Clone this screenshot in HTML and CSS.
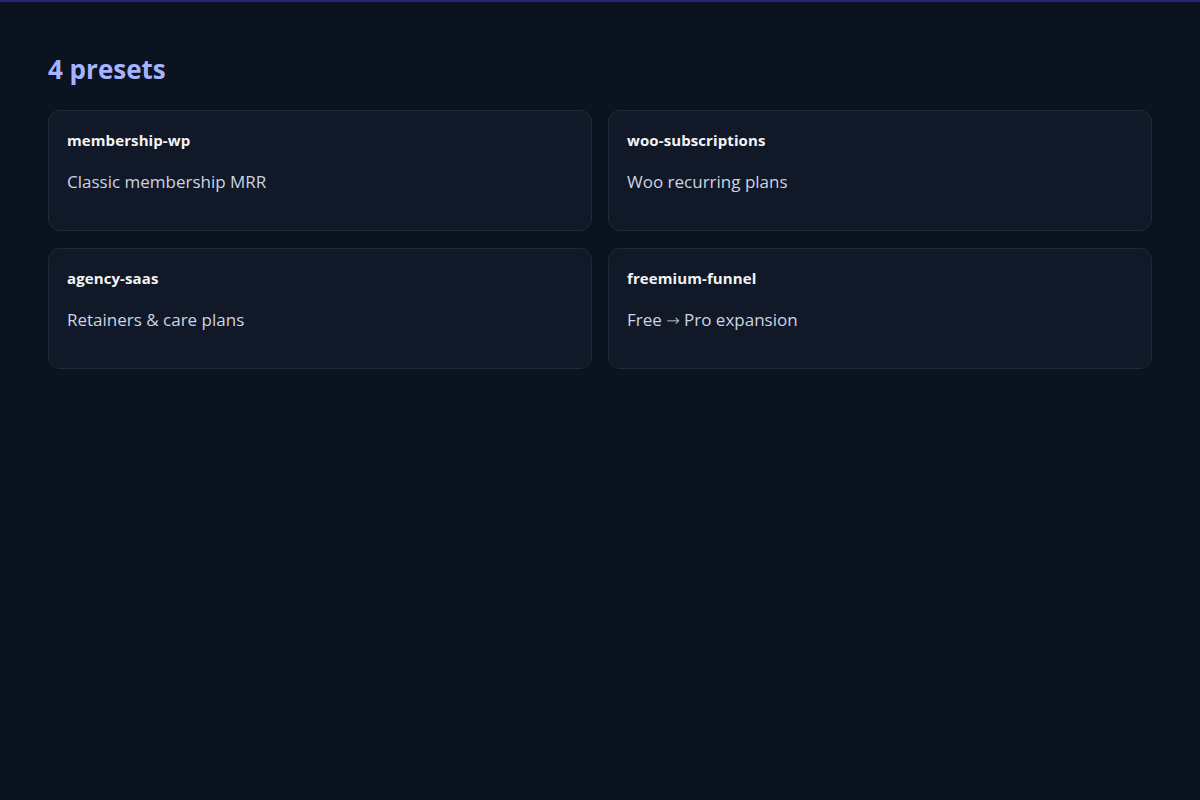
FILE: index.html
```html
<!DOCTYPE html>
<html lang="en">
<head>
  <meta charset="UTF-8" />
  <meta name="viewport" content="width=device-width, initial-scale=1.0">
  <title>Presets</title>
  <link rel="stylesheet" href="styles.css">
</head>
<body>
  <div class="topbar"></div>

  <main class="page">
    <h2 class="count">4 presets</h2>

    <div class="preset-grid">
      <div class="preset-card">
        <div class="preset-name">membership-wp</div>
        <div class="preset-desc">Classic membership MRR</div>
      </div>
      <div class="preset-card">
        <div class="preset-name">woo-subscriptions</div>
        <div class="preset-desc">Woo recurring plans</div>
      </div>
      <div class="preset-card">
        <div class="preset-name">agency-saas</div>
        <div class="preset-desc">Retainers &amp; care plans</div>
      </div>
      <div class="preset-card">
        <div class="preset-name">freemium-funnel</div>
        <div class="preset-desc">Free <span class="arrow">&rarr;</span> Pro expansion</div>
      </div>
    </div>
  </main>
</body>
</html>
```

FILE: styles.css
```css
body {
  background: #0b1220;
  color: #e5e7eb;
  font-family: 'Open Sans', 'Noto Sans', sans-serif;
  margin: 0;
  min-height: 100vh;
}

.topbar {
  height: 2px;
  background: #2b2180;
}

.page {
  padding: 50px 48px 48px;
}

.count {
  margin: 0 0 24px;
  font-size: 26px;
  font-weight: 700;
  line-height: 34px;
  color: #a5b4fc;
}

.preset-grid {
  display: grid;
  grid-template-columns: 1fr 1fr;
  gap: 17px 16px;
}

.preset-card {
  background: #111827;
  border: 1px solid #1f2937;
  border-radius: 12px;
  padding: 20px 18px 36px;
  height: 121px;
  box-sizing: border-box;
}

.preset-name {
  font-size: 15px;
  font-weight: 700;
  line-height: 18px;
  letter-spacing: 0.1px;
  color: #f3f4f6;
}

.preset-desc {
  margin-top: 21px;
  font-size: 17px;
  line-height: 24px;
  color: #cbd5e1;
}

.arrow {
  font-family: 'DejaVu Sans', sans-serif;
  font-weight: 200;
  font-size: 16px;
}
```
